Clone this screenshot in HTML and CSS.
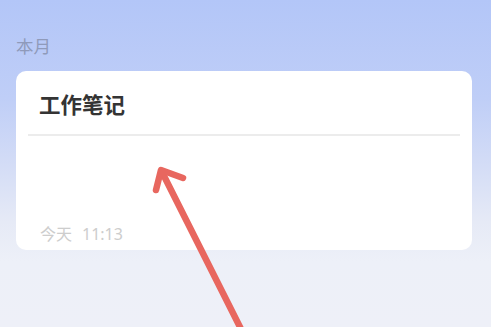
FILE: index.html
```html
<!DOCTYPE html>
<html lang="zh">
<head>
<meta charset="utf-8">
<link rel="stylesheet" href="styles.css">
</head>
<body>
<div class="page">
  <div class="section-label">本月</div>
  <div class="card">
    <div class="card-title">工作笔记</div>
    <div class="divider"></div>
    <div class="card-body"></div>
    <div class="card-time"><span class="day">今天</span><span>11:13</span></div>
  </div>
  <svg class="arrow" width="491" height="327" viewBox="0 0 491 327">
    <g stroke="#e8675f" stroke-width="6.5" stroke-linecap="round" stroke-linejoin="round" fill="none">
      <line x1="244" y1="335" x2="162" y2="172"/>
      <polyline points="183,178 161,170 156,190"/>
    </g>
  </svg>
</div>
</body>
</html>
```
FILE: styles.css
```css
html, body {
  margin: 0;
  padding: 0;
}
body {
  width: 491px;
  height: 327px;
  overflow: hidden;
  font-family: "Noto Sans", "Noto Sans CJK SC", sans-serif;
}
.page {
  position: relative;
  width: 491px;
  height: 327px;
  box-sizing: border-box;
  padding: 33px 19px 0 16px;
  background: linear-gradient(180deg, #b3c6f8 0%, #bfcef7 30%, #d3dcf6 50%, #e6eaf6 68%, #edf0f8 80%, #eef0f8 100%);
}
.section-label {
  font-size: 17.5px;
  line-height: 26px;
  color: #8f9aba;
  margin-bottom: 12px;
}
.card {
  background: #ffffff;
  border-radius: 10px;
  height: 179px;
  box-sizing: border-box;
  padding: 18px 12px 0 12px;
  display: flex;
  flex-direction: column;
}
.card-title {
  font-size: 21.5px;
  font-weight: 700;
  line-height: 32px;
  color: #343434;
  padding-left: 11px;
}
.divider {
  height: 2px;
  background: #ececec;
  margin-top: 13px;
}
.card-body {
  flex: 1;
}
.card-time {
  display: flex;
  gap: 10px;
  font-size: 16px;
  line-height: 22px;
  color: #cdcdcd;
  padding-left: 12px;
  margin-bottom: 5px;
}
.arrow {
  position: absolute;
  left: 0;
  top: 0;
}
```
